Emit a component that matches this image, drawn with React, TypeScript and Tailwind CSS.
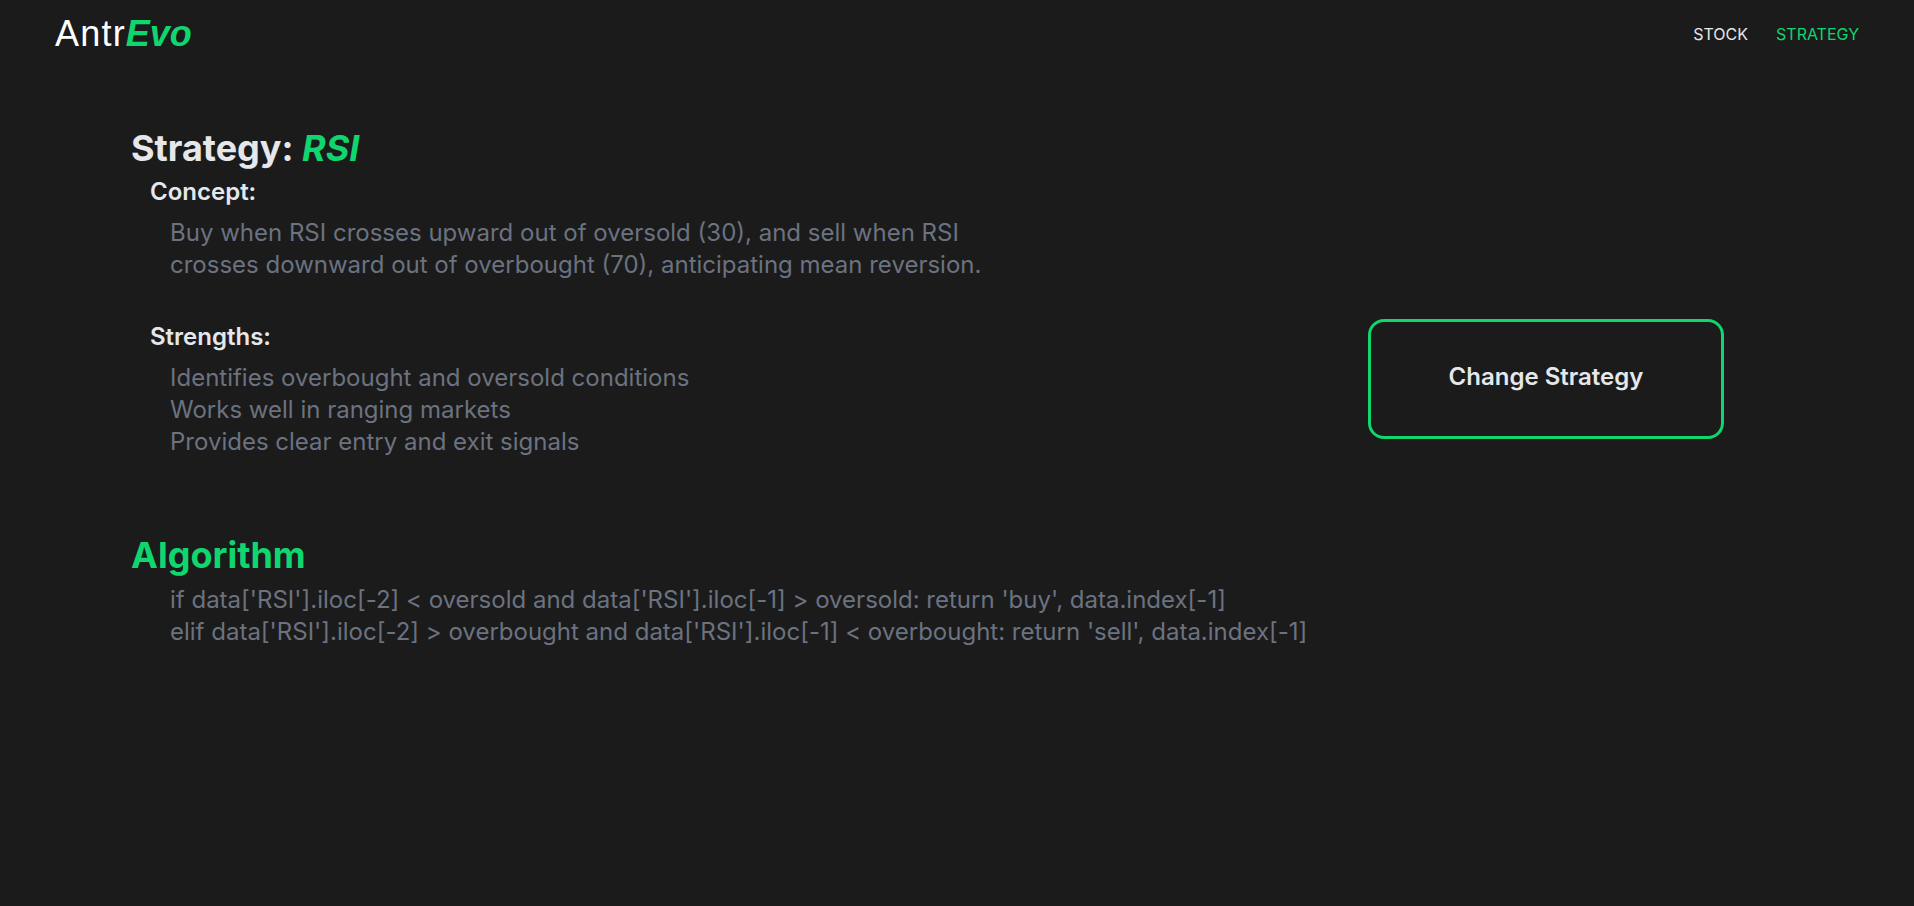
import React from 'react';

const strengths = [
  'Identifies overbought and oversold conditions',
  'Works well in ranging markets',
  'Provides clear entry and exit signals',
];

const algorithm = [
  "if data['RSI'].iloc[-2] < oversold and data['RSI'].iloc[-1] > oversold: return 'buy', data.index[-1]",
  "elif data['RSI'].iloc[-2] > overbought and data['RSI'].iloc[-1] < overbought: return 'sell', data.index[-1]",
];

function Header() {
  return (
    <header className="flex items-center justify-between px-[55px] pt-[14px]">
      <a href="/" className="text-4xl leading-10 text-white font-['Liberation_Sans',Arial,sans-serif]">
        <span className="tracking-[1.2px]">Antr</span>
        <span className="font-bold italic text-[#0fd66e]">Evo</span>
      </a>
      <nav className="flex gap-[28px] text-base text-[#e5e7eb]">
        <a href="/stock">STOCK</a>
        <a href="/strategy" className="text-[#0fd66e]">
          STRATEGY
        </a>
      </nav>
    </header>
  );
}

export default function App() {
  return (
    <div className="min-h-[906px] bg-[#1b1b1b] font-['Inter','Noto_Sans',sans-serif]">
      <Header />
      <main className="pl-[131px] pr-[190px]">
        <div className="flex items-start justify-between">
          <section className="mt-[74px]">
            <h1 className="text-4xl leading-10 font-bold text-[#e5e7eb]">
              Strategy: <span className="italic text-[#0fd66e]">RSI</span>
            </h1>
            <div className="pl-[19px]">
              <h2 className="mt-[8px] text-2xl font-semibold text-[#e5e7eb]">Concept:</h2>
              <p className="mt-[9px] pl-[20px] text-2xl text-[#6b7280]">
                Buy when RSI crosses upward out of oversold (30), and sell when RSI
                <br />
                crosses downward out of overbought (70), anticipating mean reversion.
              </p>
              <h2 className="mt-[40px] text-2xl font-semibold text-[#e5e7eb]">Strengths:</h2>
              <ul className="mt-[9px] pl-[20px] text-2xl text-[#6b7280]">
                {strengths.map((s) => (
                  <li key={s}>{s}</li>
                ))}
              </ul>
            </div>
          </section>
          <button className="mt-[265px] flex h-[120px] w-[356px] items-center justify-center rounded-2xl border-[3px] border-[#0fd66e] pb-[5px] text-2xl font-semibold text-[#e5e7eb]">
            Change Strategy
          </button>
        </div>
        <section className="mt-[77px]">
          <h2 className="text-4xl leading-10 font-bold text-[#0fd66e]">Algorithm</h2>
          <div className="mt-[9px] pl-[39px] text-2xl text-[#6b7280]">
            {algorithm.map((line) => (
              <p key={line}>{line}</p>
            ))}
          </div>
        </section>
      </main>
    </div>
  );
}
